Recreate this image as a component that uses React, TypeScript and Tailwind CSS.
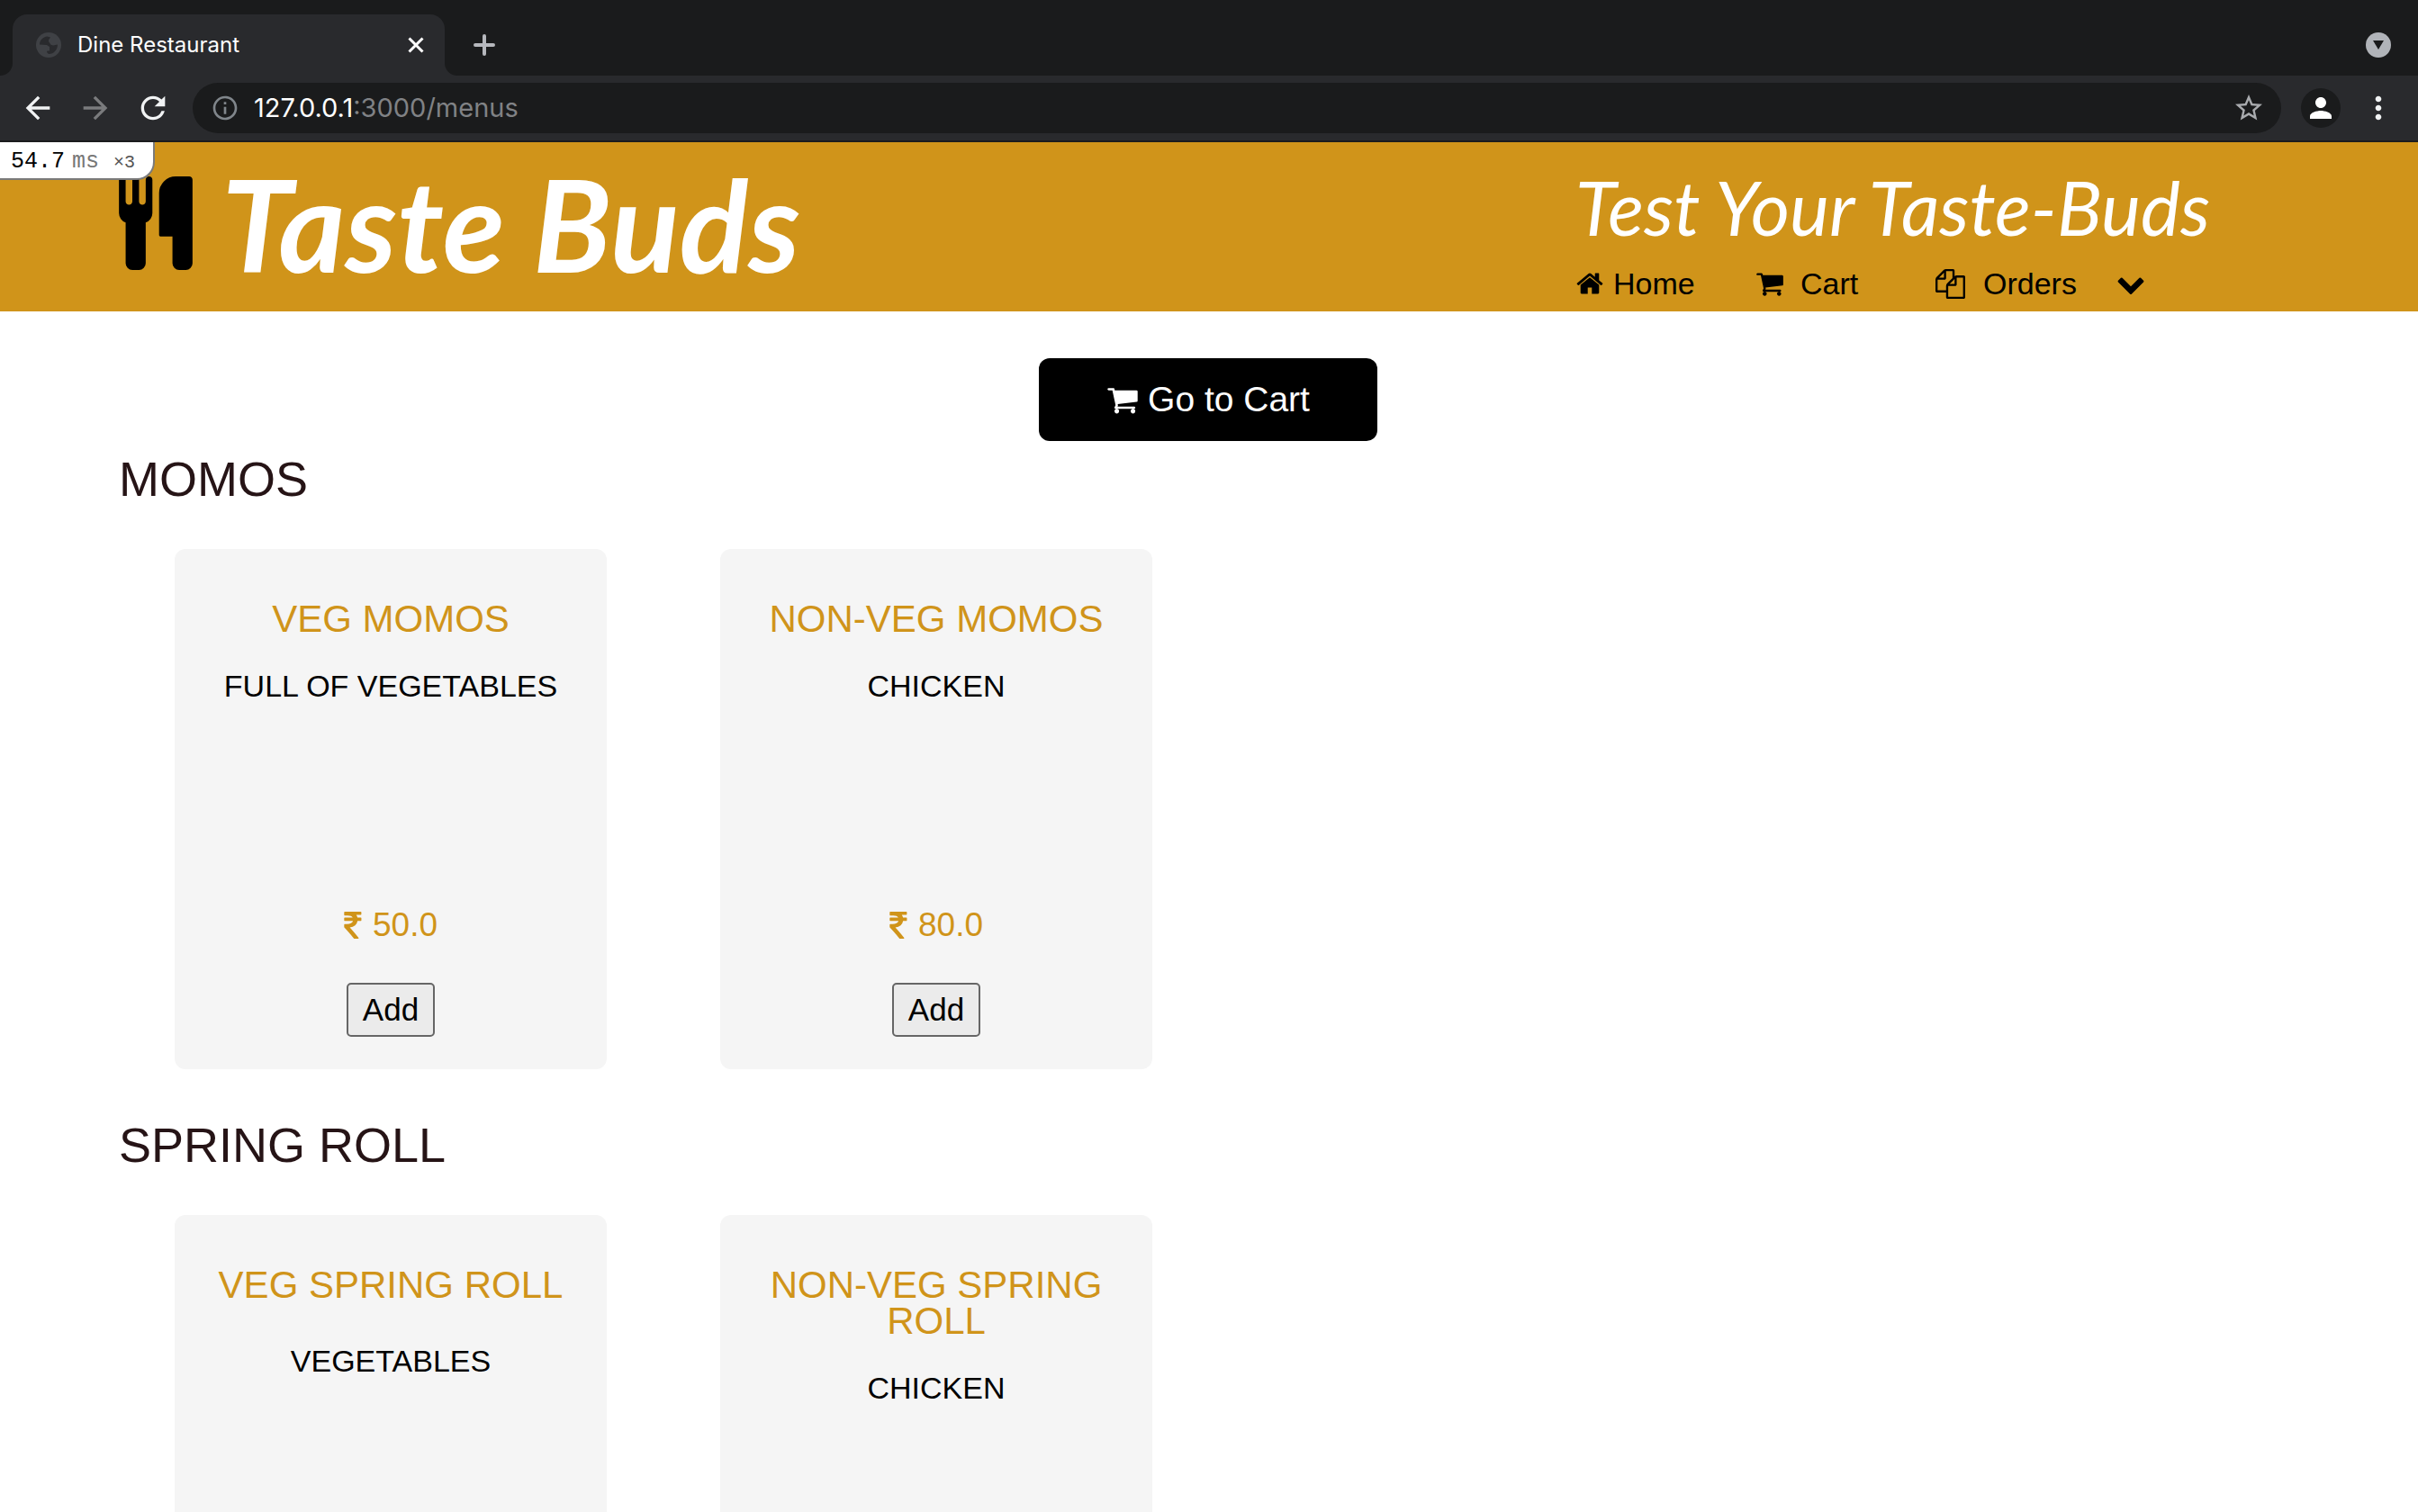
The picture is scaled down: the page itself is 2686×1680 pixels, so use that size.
import React from "react";
import {
  MdArrowBack,
  MdArrowForward,
  MdInfoOutline,
  MdMoreVert,
  MdPerson,
  MdRefresh,
  MdStarBorder,
} from "react-icons/md";

const paths = {
  cutlery:
    "M832 64v640q0 61-35.5 111t-92.5 70v779q0 52-38 90t-90 38h-128q-52 0-90-38t-38-90v-779q-57-20-92.5-70t-35.5-111v-640q0-26 19-45t45-19 45 19 19 45v416q0 26 19 45t45 19 45-19 19-45v-416q0-26 19-45t45-19 45 19 19 45v416q0 26 19 45t45 19 45-19 19-45v-416q0-26 19-45t45-19 45 19 19 45zm768 0v1600q0 52-38 90t-90 38h-128q-52 0-90-38t-38-90v-512h-224q-13 0-22.5-9.5t-9.5-22.5v-800q0-132 94-226t226-94h256q26 0 45 19t19 45z",
  home: "M1472 992v480q0 26-19 45t-45 19h-384v-384h-256v384h-384q-26 0-45-19t-19-45v-480q0-1 .5-3t.5-3l575-474 575 474q1 2 1 6zm223-69l-62 74q-8 9-21 11h-3q-13 0-21-7l-692-577-692 577q-12 8-24 7-13-2-21-11l-62-74q-8-10-7-23.5t11-21.5l719-599q32-26 76-26t76 26l244 204v-195q0-14 9-23t23-9h192q14 0 23 9t9 23v408l219 182q10 8 11 21.5t-7 23.5z",
  cart: "M704 1536q0 52-38 90t-90 38-90-38-38-90 38-90 90-38 90 38 38 90zm896 0q0 52-38 90t-90 38-90-38-38-90 38-90 90-38 90 38 38 90zm128-1088v512q0 24-16.500 42.500t-40.500 21.500l-1044 122q13 60 13 70 0 16-24 64h920q26 0 45 19t19 45-19 45-45 19h-1024q-26 0-45-19t-19-45q0-11 8-31.500t16-36 21.500-40 15.500-29.500l-177-823h-204q-26 0-45-19t-19-45 19-45 45-19h256q16 0 28.500 6.500t19.500 15.500 13 24.500 8 26 5.500 29.500 4.500 26h1201q26 0 45 19t19 45z",
  files:
    "M1696 384q40 0 68 28t28 68v1216q0 40-28 68t-68 28h-960q-40 0-68-28t-28-68v-288h-544q-40 0-68-28t-28-68v-672q0-40 20-88t48-76l408-408q28-28 76-48t88-20h416q40 0 68 28t28 68v328q68-40 128-40h416zm-544 213l-299 299h299v-299zm-640-384l-299 299h299v-299zm196 647l316-316v-416h-384v416q0 40-28 68t-68 28h-416v640h512v-256q0-40 20-88t48-76zm956 804v-1152h-384v416q0 40-28 68t-68 28h-416v640h896z",
  chevron:
    "M1683 808l-742 741q-19 19-45 19t-45-19l-742-741q-19-19-19-45.500t19-45.500l166-165q19-19 45-19t45 19l531 531 531-531q19-19 45-19t45 19l166 165q19 19 19 45.500t-19 45.500z",
  rupee:
    "M1345 470v102q0 14-9 23t-23 9h-168q-23 144-129 234t-276 110q167 178 459 536 14 16 4 34-8 18-29 18h-195q-16 0-25-12-306-367-498-571-9-9-9-22v-127q0-13 9.500-22.500t22.500-9.500h112q132 0 212.500-43t102.500-125h-427q-14 0-23-9t-9-23v-102q0-14 9-23t23-9h413q-57-113-268-113h-145q-13 0-22.500-9.500t-9.500-22.500v-133q0-14 9-23t23-9h832q14 0 23 9t9 23v102q0 14-9 23t-23 9h-233q47 61 64 144h171q14 0 23 9t9 23z",
};

function Icon({
  name,
  viewBox = "0 0 1792 1792",
  className,
}: {
  name: keyof typeof paths;
  viewBox?: string;
  className: string;
}) {
  return (
    <svg viewBox={viewBox} className={className} fill="currentColor" aria-hidden="true">
      <path d={paths[name]} />
    </svg>
  );
}

function TabStrip() {
  return (
    <div className="flex h-[84px] items-end bg-[#1a1b1c] pr-[30px]">
      <div className="h-[14px] w-[14px] bg-[#292a2d]">
        <div className="h-full w-full rounded-br-[14px] bg-[#1a1b1c]" />
      </div>
      <div className="flex h-[68px] w-[480px] items-center rounded-t-2xl bg-[#292a2d] pr-5 pl-[26px]">
        <svg viewBox="0 0 28 28" className="size-7 shrink-0" aria-hidden="true">
          <circle cx="14" cy="14" r="14" fill="#3f4145" />
          <path
            d="M4 13.500C4 9 7.500 5 12.500 4.500L16 5.500 14 8.500C13.500 10.500 15 11 16 13C18 15.500 21 14 24 13.500C24 19 20 24 14 24L12 22 12.500 20.500H15V16L12 14Z"
            fill="#292a2d"
          />
        </svg>
        <span className="ml-[18px] grow text-[24px] text-white">Dine Restaurant</span>
        <button aria-label="Close tab" className="flex size-6 items-center justify-center text-white">
          <svg viewBox="0 0 18 18" className="size-[18px]" stroke="currentColor" strokeWidth="3">
            <path d="M1.500 1.500l15 15M16.500 1.500l-15 15" />
          </svg>
        </button>
      </div>
      <div className="h-[14px] w-[14px] bg-[#292a2d]">
        <div className="h-full w-full rounded-bl-[14px] bg-[#1a1b1c]" />
      </div>
      <div className="flex h-[68px] grow items-center justify-between pl-[18px]">
        <button aria-label="New tab" className="text-[#b6b8bd]">
          <svg viewBox="0 0 24 24" className="size-6" stroke="currentColor" strokeWidth="4" strokeLinecap="round">
            <path d="M12 2v20M2 12h20" />
          </svg>
        </button>
        <button
          aria-label="Search tabs"
          className="flex size-7 items-center justify-center rounded-full bg-[#b1b4b9] text-[#1a1b1c]"
        >
          <svg viewBox="0 0 12 10" className="h-[10px] w-3" fill="currentColor">
            <path d="M0 0h12L6 10z" />
          </svg>
        </button>
      </div>
    </div>
  );
}

function Toolbar() {
  return (
    <div className="flex h-[74px] items-center border-b-2 border-[#1b1c1e] bg-[#292a2d] pr-6 pl-[22px]">
      <button aria-label="Back" className="text-[#f1f3f4]">
        <MdArrowBack className="size-10" />
      </button>
      <button aria-label="Forward" className="ml-6 text-[#7a7b7d]">
        <MdArrowForward className="size-10" />
      </button>
      <button aria-label="Reload" className="ml-6 text-[#f1f3f4]">
        <MdRefresh className="size-10" />
      </button>
      <form className="ml-6 flex h-14 grow items-center rounded-full bg-[#1a1b1c] pr-[18px] pl-5">
        <MdInfoOutline className="size-8 shrink-0 text-[#80868b]" />
        <label htmlFor="address" className="ml-4 text-[29px] text-white">
          127.0.0.1
        </label>
        <input
          id="address"
          defaultValue=":3000/menus"
          className="min-w-0 grow bg-transparent text-[29px] text-[#808285] outline-none"
        />
        <button type="button" aria-label="Bookmark" className="text-[#a9abae]">
          <MdStarBorder className="size-9" />
        </button>
      </form>
      <button
        aria-label="Profile"
        className="ml-[22px] flex size-11 items-center justify-center rounded-full bg-[#1a1b1c] text-white"
      >
        <MdPerson className="size-9" />
      </button>
      <button aria-label="Menu" className="ml-[22px] text-[#f1f3f4]">
        <MdMoreVert className="size-10" />
      </button>
    </div>
  );
}

function SiteHeader() {
  return (
    <header className="relative flex h-[188px] shrink-0 justify-between bg-[#d0941a] pr-[136px] pl-[132px]">
      <a href="#" className="flex items-start">
        <Icon name="cutlery" viewBox="192 0 1408 1792" className="mt-[38px] h-[104px] w-[82px] text-black" />
        <span className="ml-8 pt-5 font-['Lato'] text-[142px] leading-[140px] font-bold text-white italic">
          Taste Buds
        </span>
      </a>
      <div className="w-[800px] pt-6">
        <p className="font-['Lato'] text-[83px] leading-[96px] text-white italic">Test Your Taste-Buds</p>
        <nav className="flex h-[74px] items-center text-[34px] text-black">
          <a href="#home" className="flex w-[200px] items-center gap-[10px]">
            <Icon name="home" className="size-8" />
            Home
          </a>
          <a href="#cart" className="flex w-[200px] items-center gap-[18px]">
            <Icon name="cart" className="size-8" />
            Cart
          </a>
          <a href="#orders" className="flex items-center gap-5">
            <Icon name="files" className="size-[33px]" />
            Orders
          </a>
          <button aria-label="More orders" className="ml-11">
            <Icon name="chevron" className="size-8" />
          </button>
        </nav>
      </div>
      <div className="absolute top-0 left-0 flex h-[42px] w-[172px] items-baseline rounded-br-[20px] border-r-2 border-b-2 border-[#7a7a7a] bg-white pt-[6px] pl-3 font-['Liberation_Mono'] text-[25px] leading-8 text-black">
        54.7
        <span className="ml-2 text-[#777]">ms</span>
        <span className="ml-4 text-[20px] text-[#555]">×3</span>
      </div>
    </header>
  );
}

type Item = { name: string; detail: string; price?: string; loose?: boolean };

const sections: { title: string; items: Item[] }[] = [
  {
    title: "MOMOS",
    items: [
      { name: "VEG MOMOS", detail: "FULL OF VEGETABLES", price: "50.0" },
      { name: "NON-VEG MOMOS", detail: "CHICKEN", price: "80.0" },
    ],
  },
  {
    title: "SPRING ROLL",
    items: [
      { name: "VEG SPRING ROLL", detail: "VEGETABLES", loose: true },
      { name: "NON-VEG SPRING ROLL", detail: "CHICKEN" },
    ],
  },
];

function Card({ item }: { item: Item }) {
  return (
    <article className="flex min-h-[578px] w-[480px] flex-col items-center rounded-xl bg-[#f5f5f5] px-8 pt-[58px] pb-9 text-center">
      <h3 className="text-[42px] leading-10 text-[#d0941a]">{item.name}</h3>
      <p className={item.loose ? "mt-11 text-[34px] leading-10 text-black" : "mt-[34px] text-[34px] leading-10 text-black"}>
        {item.detail}
      </p>
      {item.price && (
        <>
          <p className="mt-auto flex items-center gap-3 text-[37px] leading-10 text-[#d0941a]">
            <Icon name="rupee" viewBox="447 128 910 1408" className="h-[30px] w-5" />
            {item.price}
          </p>
          <button className="mt-11 flex h-[60px] w-[98px] items-center justify-center rounded-[5px] border-2 border-[#666] bg-[#ebebeb] text-[35px] text-black">
            Add
          </button>
        </>
      )}
    </article>
  );
}

export default function App() {
  return (
    <div className="flex h-screen flex-col overflow-hidden bg-white font-['Liberation_Sans',Arial,sans-serif]">
      <div className="shrink-0 font-['Inter',sans-serif]">
        <TabStrip />
        <Toolbar />
      </div>
      <SiteHeader />
      <main className="min-h-0 grow overflow-hidden pt-[52px] pr-[134px] pl-[132px]">
        <button className="mx-auto flex h-[92px] w-[376px] items-center justify-center gap-[10px] rounded-xl bg-black text-[39px] text-white">
          <Icon name="cart" className="size-9" />
          Go to Cart
        </button>
        {sections.map((section) => (
          <section key={section.title} className="mb-[42px]">
            <h2 className="pt-3 pb-12 text-[54px] leading-[60px] text-[#261416]">{section.title}</h2>
            <div className="flex flex-wrap gap-x-[126px] gap-y-10 pl-[62px]">
              {section.items.map((item) => (
                <Card key={item.name} item={item} />
              ))}
            </div>
          </section>
        ))}
      </main>
    </div>
  );
}
